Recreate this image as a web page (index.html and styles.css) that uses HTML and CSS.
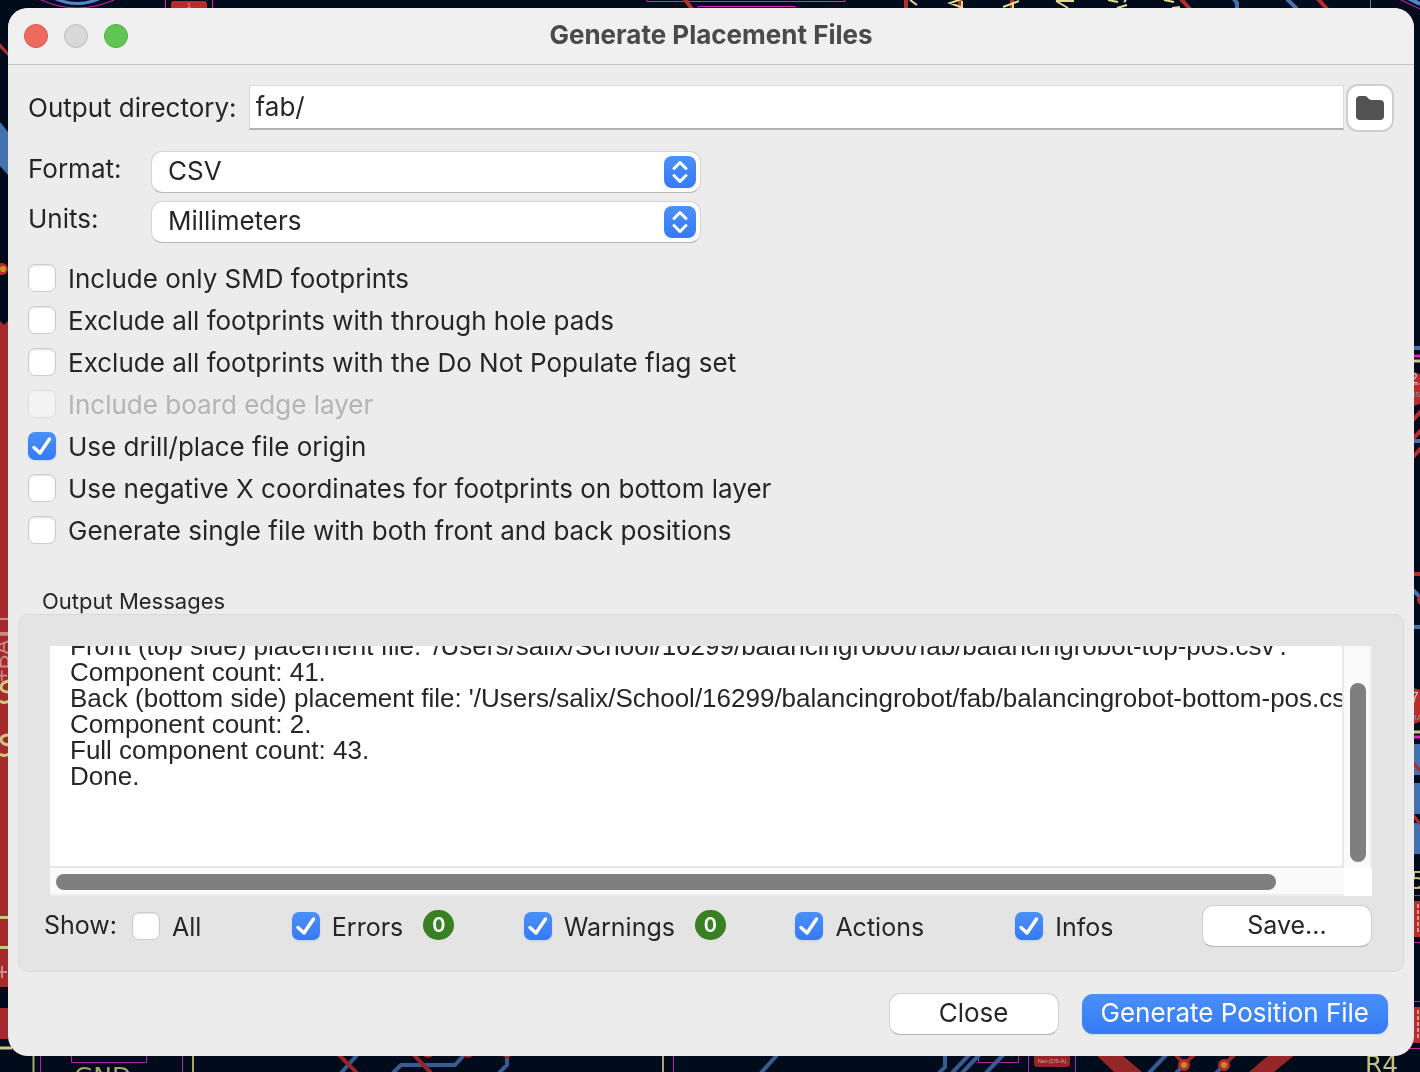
FILE: index.html
```html
<!DOCTYPE html>
<html lang="en">
<head>
<meta charset="utf-8">
<title>Generate Placement Files</title>
<link rel="stylesheet" href="styles.css">
</head>
<body>
<svg class="board" viewBox="0 0 1420 1072" preserveAspectRatio="xMinYMin slice" aria-hidden="true">
  <!-- top edge -->
  <g fill="none">
    <path d="M50 -4 Q77 11 105 -4" stroke="#4f86cf" stroke-width="3"/>
    <path d="M41 0 Q77 16 114 0M165.500 0V8M212.500 0V8M698 8V6.500H795V8M1401 0L1420 9" stroke="#e020c8"/>
    <path d="M647 0V1.500H845V0" stroke="#e020c8"/>
    <path d="M1406 -3L1420 4" stroke="#4f86cf" stroke-width="4"/>
    <path d="M684 -2L692 9M1180 -2L1191 10M1317 -2L1328 10M906 0V8M960 0V8M1012 0V8" stroke="#b82c2e" stroke-width="4"/>
    <path d="M1233 -2L1237 3V9M1286 -2L1297 9" stroke="#4471b0" stroke-width="4"/>
    <path d="M1370.500 0V8" stroke="#70777f"/>
    <path d="M910 0L917 5M962 -1L950 3L963 8M962 1V7M1019 1L1003 7M1013 2V8M1056 1H1074M1056 1L1068 8M1108 0L1118 2M1117 8L1127 5M1124 2L1126 0M1164 0L1174 2M1172 8L1180 7" stroke="#e0da92" stroke-width="2"/>
  </g>
  <rect x="171" y="1" width="36" height="12" rx="3" fill="#b82c2e"/>
  <text x="189" y="8" class="pad-label">1</text>
  <!-- left edge -->
  <path d="M0 43L8 52V56L0 48Z" fill="#b82c2e"/>
  <path d="M0 122L8 132V175L0 166Z" fill="#4471b0"/>
  <circle cx="2" cy="269" r="6" fill="#b82c2e"/><circle cx="3" cy="269" r="3" fill="#c49a26"/>
  <path d="M0 321L4 325L8 321V987H0ZM0 1008H8V1039H0Z" fill="#a62a2c"/>
  <path d="M0 619H8M0 633H8" stroke="#c98a8b" stroke-width="2"/>
  <text class="net" transform="translate(9 682) rotate(-90)">+BAT</text>
  <path d="M9 681Q1 682 1 688Q2 692 9 692M0 701Q4 704 9 701M9 735Q1 735 1 740Q2 744 9 745M0 754Q4 757 9 754M0 917.500H8M0 947.500H8M0 1048H12" fill="none" stroke="#cfc885" stroke-width="3"/>
  <path d="M0 972H7M2 966V978" stroke="#c98a8b" stroke-width="2"/>
  <!-- right edge -->
  <path d="M1413 348H1420M1413 441H1420M1413 627H1420" stroke="#4471b0" stroke-width="4"/>
  <path d="M1413 356H1420M1413 737H1420" stroke="#e020c8" stroke-width="3"/>
  <path d="M1413 361H1420M1413 732H1420" stroke="#cfc885" stroke-width="3"/>
  <path d="M1413 420L1421 411M1413 439L1421 430M1413 457L1421 448M1413 574H1420" stroke="#b82c2e" stroke-width="4"/>
  <path d="M1413 590L1420 597" stroke="#4471b0" stroke-width="4"/>
  <circle cx="1422" cy="600" r="5" fill="#b82c2e"/>
  <circle cx="1411" cy="389" r="17" fill="#b82c2e"/>
  <circle cx="1411" cy="706" r="18" fill="#b82c2e"/>
  <text class="net-small" x="1410" y="383">2</text><path d="M1413 384H1419" stroke="#c9c9c9"/>
  <text class="net-tiny" x="1413" y="397">IS</text>
  <text class="net-small" x="1411" y="702">7</text><text class="net-tiny" x="1411" y="720">RA</text>
  <path d="M1413 744H1420V775H1413ZM1413 783H1420V814H1413ZM1413 823H1420V854H1413Z" fill="#4471b0"/>
  <path d="M1413 762L1420 771M1413 815L1420 824" stroke="#b82c2e" stroke-width="3"/>
  <text class="silk" x="1410" y="889">5</text>
  <path d="M1413 901H1420V937H1413ZM1413 1007H1420V1043H1413Z" fill="#b82c2e"/>
  <path d="M1418 904V934M1418 1010V1040" stroke="#cf9a9b" stroke-width="2" stroke-dasharray="4 2"/>
  <path d="M1413 895.500H1420M1413 942.500H1420M1413 1001.500H1420M1408 1048.500H1420" stroke="#c41fb4"/>
  <!-- bottom edge -->
  <g fill="none">
    <path d="M33.500 1054V1072M193 1054V1072M663 1054V1072" stroke="#aaa56c" stroke-width="2"/>
    <path d="M40.500 1054V1072M71.500 1054V1062.500H146.500V1054M182.500 1054V1072M673.500 1054V1072M978.500 1054V1062.500H1018.500V1054M1028.500 1054V1072M1075.500 1054V1072" stroke="#b41fac"/>
    <path d="M358 1054L341 1073M465 1054L455 1065H401L393 1073M507 1054V1065L499 1073M778 1054L760 1074M945 1054V1067L938 1074M970 1054L952 1073M980 1054L962 1073M1004 1054L985 1074M1167 1054L1149 1073M1182 1067L1175 1074M1222 1067L1215 1074" stroke="#365c92" stroke-width="4"/>
    <path d="M338 1054L357 1073M413 1054L431 1073M1175 1054L1184 1064L1195 1054M1224 1065L1235 1054" stroke="#942528" stroke-width="4"/>
  </g>
  <path d="M1095 1054H1121L1142 1072H1114ZM1270 1054H1296L1274 1072H1249Z" fill="#942528"/>
  <circle cx="428" cy="1052" r="6" fill="#942528"/><circle cx="468" cy="1052" r="6" fill="#942528"/><circle cx="507" cy="1053" r="5" fill="#942528"/>
  <circle cx="1184" cy="1065" r="6" fill="#b42c2e"/><circle cx="1184" cy="1065" r="3" fill="#bb8f25"/>
  <circle cx="1224" cy="1065" r="6" fill="#b42c2e"/><circle cx="1224" cy="1065" r="3" fill="#bb8f25"/>
  <rect x="1034" y="1052" width="36" height="15" rx="3" fill="#942528"/>
  <text class="pad-label pad-net" x="1052" y="1063">Net-(D5-A)</text>
  <text class="silk silk-dim" x="74" y="1085">GND</text>
  <text class="silk" x="1365" y="1073">R4</text>
</svg>

<main class="window">
  <header class="titlebar">
    <div class="lights">
      <button class="light light-close" type="button" aria-label="Close window"></button>
      <button class="light light-min" type="button" aria-label="Minimize" disabled></button>
      <button class="light light-zoom" type="button" aria-label="Zoom"></button>
    </div>
    <h1 class="title">Generate Placement Files</h1>
  </header>

  <form class="content">
    <div class="dir-row">
      <label for="dir">Output directory:</label>
      <input class="dir-input" id="dir" type="text" value="fab/">
      <button class="browse" type="button" aria-label="Browse">
        <svg width="28" height="24" viewBox="0 0 28 24" aria-hidden="true"><path d="M0 4Q0 0 4 0H9Q11 0 12 2L13 3Q14 4 16 4H24Q28 4 28 8V20Q28 24 24 24H4Q0 24 0 20Z" fill="#525252"/></svg>
      </button>
    </div>

    <div class="options">
      <label for="format">Format:</label>
      <select class="popup" id="format"><option>CSV</option></select>
      <label for="units">Units:</label>
      <select class="popup" id="units"><option>Millimeters</option></select>
    </div>

    <div class="checks">
      <label class="check"><input type="checkbox">Include only SMD footprints</label>
      <label class="check"><input type="checkbox">Exclude all footprints with through hole pads</label>
      <label class="check"><input type="checkbox">Exclude all footprints with the Do Not Populate flag set</label>
      <label class="check check-off"><input type="checkbox" disabled>Include board edge layer</label>
      <label class="check"><input type="checkbox" checked>Use drill/place file origin</label>
      <label class="check"><input type="checkbox">Use negative X coordinates for footprints on bottom layer</label>
      <label class="check"><input type="checkbox">Generate single file with both front and back positions</label>
    </div>

    <fieldset class="messages">
      <legend>Output Messages</legend>
      <div class="panel">
        <div class="log">
          <div class="log-text" role="log">
            <p>Front (top side) placement file: '/Users/salix/School/16299/balancingrobot/fab/balancingrobot-top-pos.csv'.</p>
            <p>Component count: 41.</p>
            <p>Back (bottom side) placement file: '/Users/salix/School/16299/balancingrobot/fab/balancingrobot-bottom-pos.csv'.</p>
            <p>Component count: 2.</p>
            <p>Full component count: 43.</p>
            <p>Done.</p>
          </div>
          <div class="track track-y"><div class="thumb"></div></div>
          <div class="track track-x"><div class="thumb"></div></div>
          <div class="corner"></div>
        </div>
        <div class="show">
          <span class="show-label">Show:</span>
          <label class="check"><input type="checkbox">All</label>
          <label class="check"><input type="checkbox" checked>Errors<span class="badge">0</span></label>
          <label class="check"><input type="checkbox" checked>Warnings<span class="badge">0</span></label>
          <label class="check"><input type="checkbox" checked>Actions</label>
          <label class="check"><input type="checkbox" checked>Infos</label>
          <button class="btn" type="button">Save...</button>
        </div>
      </div>
    </fieldset>

    <footer class="actions">
      <button class="btn" type="button">Close</button>
      <button class="btn btn-primary" type="button">Generate Position File</button>
    </footer>
  </form>
</main>
</body>
</html>
```
FILE: styles.css
```css
* { box-sizing: border-box; }

body {
  margin: 0;
  min-height: 100vh;
  padding: 8px 6px 16px 8px;
  display: flex;
  background: #000c1c;
  color: #262626;
  font: 26px/32px Inter, "Liberation Sans", sans-serif;
  overflow: hidden;
}

button, input, select { margin: 0; font: inherit; color: inherit; }

/* circuit board visible behind the dialog */
.board {
  position: fixed;
  inset: 0;
  width: 100%;
  height: 100%;
  z-index: -1;
}
.pad-label { font: 8px "Liberation Sans", sans-serif; fill: #d8a0a0; text-anchor: middle; }
.pad-net { font-size: 6px; }
.net { font: 22px "Liberation Sans", sans-serif; fill: #c98a8b; }
.net-small { font: 14px "Liberation Sans", sans-serif; fill: #c9c9c9; }
.net-tiny { font: 8px "Liberation Sans", sans-serif; fill: #8f959c; }
.silk { font: 25px "DejaVu Sans", sans-serif; fill: #c4be80; }
.silk-dim { fill: #aaa56c; }

.window {
  flex: 1;
  min-width: 0;
  display: flex;
  flex-direction: column;
  background: #ececec;
  border-radius: 20px;
  overflow: hidden;
}

.titlebar {
  display: grid;
  grid-template-columns: 1fr auto 1fr;
  align-items: center;
  height: 57px;
  padding: 0 16px;
  background: #f0f0f0;
  border-bottom: 1px solid #c6c6c6;
}
.lights { display: flex; gap: 16px; }
.light { width: 24px; height: 24px; padding: 0; border: 1px solid; border-radius: 50%; }
.light-close { background: #ed6a5e; border-color: #d9564b; }
.light-min { background: #d8d8d8; border-color: #bcbcbc; }
.light-zoom { background: #61c554; border-color: #4cae40; }
.title { margin: 0 0 2px; font-size: 26px; font-weight: 700; line-height: 32px; color: #4a4a4a; }

.content { flex: 1; display: flex; flex-direction: column; padding: 19px 10px; }

.dir-row { display: flex; align-items: center; padding: 0 10px; }
.dir-input {
  flex: 1;
  min-width: 0;
  height: 45px;
  margin: 0 2px 2px 12px;
  padding: 0 6px;
  background: #fff;
  border: 1px solid #dadada;
  border-bottom: 2px solid #b2b2b2;
  border-radius: 0;
}
.browse {
  display: grid;
  place-items: center;
  width: 48px;
  height: 48px;
  padding: 0;
  background: #fff;
  border: 2px solid #cfcfcf;
  border-radius: 12px;
}

.options {
  display: grid;
  grid-template-columns: 113px minmax(0, 550px);
  gap: 8px 10px;
  padding: 19px 10px 0;
}
.options label { padding-top: 2px; }
.popup {
  appearance: none;
  height: 42px;
  padding: 0 48px 2px 16px;
  border: 1px solid #d4d4d4;
  border-bottom-color: #b8b8b8;
  border-radius: 11px;
  background: #fff url("data:image/svg+xml,%3Csvg xmlns='http://www.w3.org/2000/svg' width='32' height='32'%3E%3ClinearGradient id='g' x2='0' y2='1'%3E%3Cstop stop-color='%234a90f8'/%3E%3Cstop offset='1' stop-color='%23357af6'/%3E%3C/linearGradient%3E%3Crect width='32' height='32' rx='8' fill='url(%23g)'/%3E%3Cpath d='M10 12.500L16 6.500L22 12.500M10 19.500L16 25.500L22 19.500' fill='none' stroke='%23fff' stroke-width='3' stroke-linecap='round' stroke-linejoin='round'/%3E%3C/svg%3E") no-repeat right 4px center;
}

.checks { display: grid; gap: 10px; padding: 20px 10px 0; }
.check { display: flex; align-items: center; gap: 12px; white-space: nowrap; }
.check input {
  appearance: none;
  flex: none;
  width: 28px;
  height: 28px;
  margin-bottom: 2px;
  background: #fff;
  border: 1px solid #cbcbcb;
  border-radius: 7px;
  box-shadow: inset 0 1px 2px #0000001f;
}
.check input:checked {
  border: 0;
  box-shadow: 0 1px 2px #3b7df633;
  background: url("data:image/svg+xml,%3Csvg xmlns='http://www.w3.org/2000/svg' viewBox='0 0 28 28'%3E%3Cpath d='M6 15.500L12 21L21.500 7' fill='none' stroke='%23fff' stroke-width='3.500' stroke-linecap='round' stroke-linejoin='round'/%3E%3C/svg%3E") center / 28px 28px, linear-gradient(#4a90f8, #357af6);
}
.check input:disabled { background: #f3f3f3; border-color: #dedede; box-shadow: none; }
.check-off { color: #b4b4b4; }

.messages { min-width: 0; margin: 37px 0 0; padding: 0; border: 0; }
.messages legend { padding: 4px 24px 0; font-size: 22px; line-height: 26px; }
.panel {
  padding: 31px 31px 24px;
  background: #e4e4e4;
  border: 1px solid #dadada;
  border-radius: 10px;
}

.log {
  display: grid;
  grid-template: 222px 28px / minmax(0, 1fr) 28px;
  background: #fff;
}
.log-text {
  display: flex;
  flex-direction: column;
  justify-content: flex-end;
  min-height: 0;
  padding: 0 0 77px 20px;
  overflow: hidden;
  white-space: nowrap;
  border-right: 2px solid #e8e8e8;
  border-bottom: 2px solid #e8e8e8;
  font: 26px/26px "Liberation Sans", Arial, sans-serif;
}
.log-text p { margin: 0; }
.track { display: flex; background: #fafafa; }
.track .thumb { background: #7f7f7f; border-radius: 8px; }
.track-y { padding: 37px 4px 6px 6px; border-right: 2px solid #ececec; }
.track-y .thumb { width: 16px; }
.track-x { padding: 6px 68px 4px 6px; border-bottom: 2px solid #ececec; }
.track-x .thumb { flex: 1; }

.show {
  display: grid;
  grid-template-columns: 82px 160fr 232fr 272fr 220fr 187fr 170px;
  align-items: center;
  margin-top: 9px;
  font-size: 25px;
}
.show .check { padding-top: 2px; }
.show-label { margin: 0 0 3px -6px; }
.badge {
  margin: 0 0 4px 8px;
  width: 31px;
  height: 30px;
  border-radius: 15px;
  background: #398023;
  color: #fff;
  font-size: 20px;
  font-weight: 600;
  line-height: 30px;
  text-align: center;
}

.btn {
  width: 170px;
  height: 42px;
  padding: 0 0 2px;
  background: #fff;
  border: 1px solid #d0d0d0;
  border-bottom-color: #b4b4b4;
  border-radius: 11px;
}
.btn-primary {
  width: auto;
  height: 40px;
  padding: 0 19px 2px;
  border: 0;
  color: #fff;
  background: linear-gradient(#4a90f8, #357af6);
  box-shadow: 0 1px 2px #3b7df633;
}
.actions {
  display: flex;
  justify-content: flex-end;
  align-items: center;
  gap: 23px;
  padding: 21px 16px 0;
}
```
